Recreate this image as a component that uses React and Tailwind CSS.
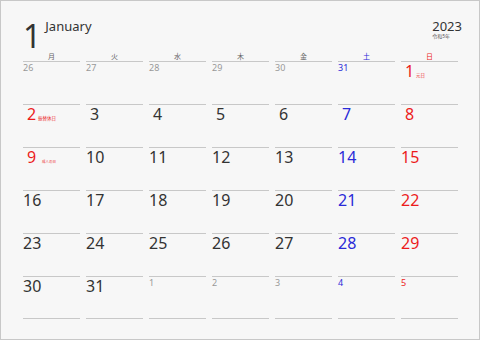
import React from 'react';

const WEEK = [
  { label: '月', tone: 'text-[#666]' },
  { label: '火', tone: 'text-[#666]' },
  { label: '水', tone: 'text-[#666]' },
  { label: '木', tone: 'text-[#666]' },
  { label: '金', tone: 'text-[#666]' },
  { label: '土', tone: 'text-[#2a2ad8]' },
  { label: '日', tone: 'text-[#ec1c1c]' },
];

// out = day outside January (drawn small)
const ROWS = [
  [{ d: 26, out: true }, { d: 27, out: true }, { d: 28, out: true }, { d: 29, out: true }, { d: 30, out: true }, { d: 31, out: true }, { d: 1, hol: '元日' }],
  [{ d: 2, hol: '振替休日' }, { d: 3 }, { d: 4 }, { d: 5 }, { d: 6 }, { d: 7 }, { d: 8 }],
  [{ d: 9, hol: '成人の日', small: true }, { d: 10 }, { d: 11 }, { d: 12 }, { d: 13 }, { d: 14 }, { d: 15 }],
  [{ d: 16 }, { d: 17 }, { d: 18 }, { d: 19 }, { d: 20 }, { d: 21 }, { d: 22 }],
  [{ d: 23 }, { d: 24 }, { d: 25 }, { d: 26 }, { d: 27 }, { d: 28 }, { d: 29 }],
  [{ d: 30 }, { d: 31 }, { d: 1, out: true }, { d: 2, out: true }, { d: 3, out: true }, { d: 4, out: true }, { d: 5, out: true }],
];

function tone(col, day) {
  if (col === 5) return 'text-[#2a2ad8]';
  if (col === 6 || day.hol) return 'text-[#ec1c1c]';
  return day.out ? 'text-[#999]' : 'text-[#333]';
}

function DayCell({ day, col, last }) {
  return (
    <div
      className={`h-[43px] border-t border-[#c8c8c8] pt-[1px] ${last ? 'border-b' : ''}`}
    >
      {day.out ? (
        <span className={`block text-[9px] leading-[9px] ${tone(col, day)}`}>{day.d}</span>
      ) : (
        <div className="flex items-baseline whitespace-nowrap">
          <span className={`block w-[17px] shrink-0 text-center text-[16px] leading-[16px] ${tone(col, day)}`}>
            {day.d}
          </span>
          {day.hol && (
            <span
              className={`text-[#ec2a2a] leading-none ${day.small ? 'ml-[2px] text-[3.5px]' : 'ml-[-2px] text-[4.5px]'}`}
            >
              {day.hol}
            </span>
          )}
        </div>
      )}
    </div>
  );
}

export default function App() {
  return (
    <div
      className="w-[480px] h-[340px] border border-[#c8c8c8] bg-[#f7f7f7] pl-[22px] pr-[21px] pt-[19px]"
      style={{ fontFamily: '"Noto Sans", "Noto Sans CJK JP", sans-serif' }}
    >
      {/* month / year header */}
      <div className="flex justify-between h-[33px]">
        <div className="flex items-start">
          <span className="text-[32px] leading-[32px] text-[#333]">1</span>
          <span className="ml-[4px] text-[13px] leading-[13px] text-[#333]">January</span>
        </div>
        <div className="mr-[-4px] flex flex-col">
          <span className="text-[13px] leading-[13px] text-[#333]">2023</span>
          <span className="mt-[1px] text-[5px] leading-[5px] text-[#555]">令和5年</span>
        </div>
      </div>

      {/* weekday labels */}
      <div className="grid grid-cols-[repeat(7,57px)] gap-x-[6px] h-[8px]">
        {WEEK.map((w) => (
          <div key={w.label} className={`text-center text-[7px] leading-[8px] ${w.tone}`}>
            {w.label}
          </div>
        ))}
      </div>

      {/* dates */}
      {ROWS.map((row, r) => (
        <div key={r} className="grid grid-cols-[repeat(7,57px)] gap-x-[6px]">
          {row.map((day, c) => (
            <DayCell key={c} day={day} col={c} last={r === ROWS.length - 1} />
          ))}
        </div>
      ))}
    </div>
  );
}
